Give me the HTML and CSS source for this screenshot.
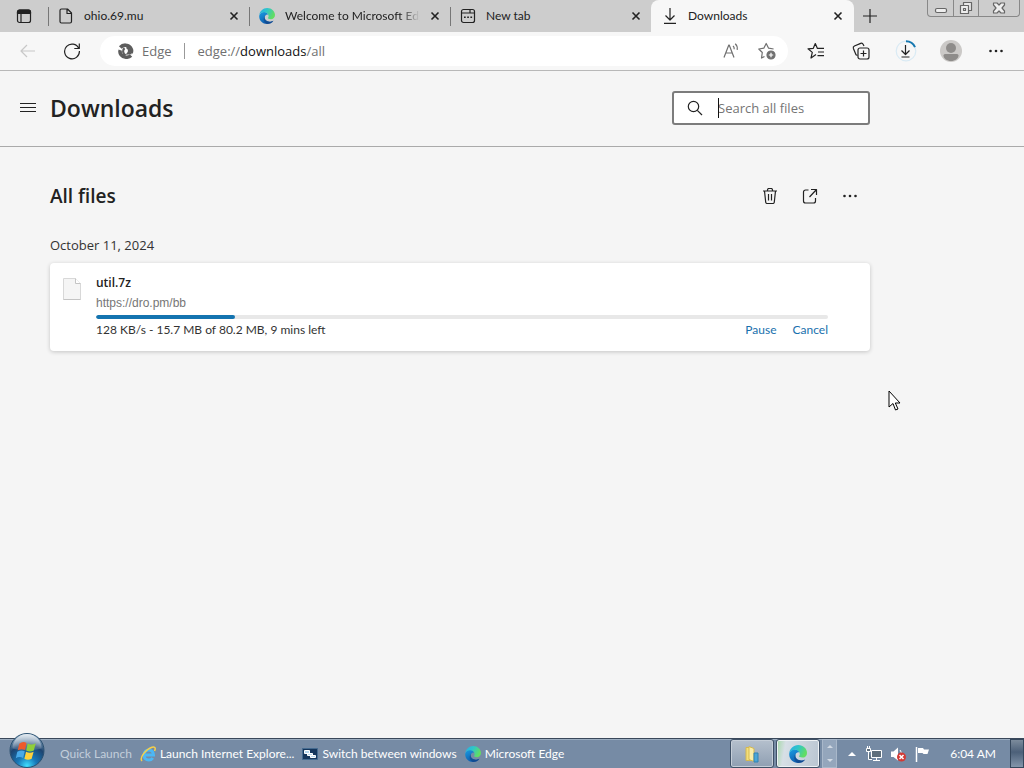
FILE: index.html
```
<!DOCTYPE html>
<html lang="en">
<head>
<meta charset="utf-8">
<title>Downloads</title>
<link rel="stylesheet" href="styles.css">
</head>
<body>
<svg class="defs" aria-hidden="true">
  <defs>
    <linearGradient id="edgeTop" x1="0" y1="0" x2="1" y2="0.4"><stop offset="0" stop-color="#2aa9e8"/><stop offset="0.5" stop-color="#2fc6c8"/><stop offset="1" stop-color="#62dd62"/></linearGradient>
    <linearGradient id="edgeLow" x1="0" y1="0" x2="0.6" y2="1"><stop offset="0" stop-color="#1b9de2"/><stop offset="1" stop-color="#0c55a8"/></linearGradient>
    <radialGradient id="orb" cx="0.5" cy="0.95" r="0.95"><stop offset="0" stop-color="#3fe0ff"/><stop offset="0.3" stop-color="#1878b8"/><stop offset="0.65" stop-color="#1d4470"/><stop offset="1" stop-color="#9ab6cc"/></radialGradient>
    <linearGradient id="gloss" x1="0" y1="0" x2="0" y2="1"><stop offset="0" stop-color="#fff" stop-opacity="0.75"/><stop offset="1" stop-color="#fff" stop-opacity="0.1"/></linearGradient>
    <symbol id="edge" viewBox="0 0 16 16">
      <path fill="url(#edgeLow)" d="M0.2 8.5C0.2 5.5 2.8 3.7 5.6 3.9c2 .2 3.3 1.300 3.700 2.700C7.500 5.900 5.600 7.300 5.700 9.600c.1 2.700 2.900 4.300 5.600 4.100 1.200-.1 2.200-.5 3.100-.9C13 14.900 10.700 16 8.100 16 3.700 16 .2 12.700.2 8.500z"/>
      <path fill="#123f80" fill-opacity=".55" d="M5.700 9.600c0 2.600 2.800 4.400 5.600 4.100 1.200-.1 2.200-.5 3.100-.9C13 14.900 10.700 16 8.500 16 5 15.500 3.500 11 5.700 8z"/>
      <path fill="url(#edgeTop)" d="M.2 7.500C.6 3.200 4 0 8.200 0 12.800 0 16 3.400 16 7c0 2.700-1.900 4.200-4.200 4.200-1.800 0-2.900-.6-2.900-1.100 0-.4.7-.7.7-1.900C9.600 5.800 7.600 4.300 5.200 4.300 2.800 4.300.9 5.500.2 7.500z"/>
    </symbol>
    <symbol id="close" viewBox="0 0 10 10"><path d="M1.500 1.500l7 7M8.500 1.500l-7 7"/></symbol>
    <symbol id="dots" viewBox="0 0 16 16"><g fill="currentColor" stroke="none"><circle cx="2.500" cy="8" r="1.300"/><circle cx="8" cy="8" r="1.300"/><circle cx="13.500" cy="8" r="1.300"/></g></symbol>
  </defs>
</svg>

<header class="browser">
  <div class="tabstrip">
    <button class="tab-actions" aria-label="Tab actions"><svg class="icon i16" viewBox="0 0 16 16"><rect x="1.500" y="2" width="13" height="12.500" rx="2"/><path fill="currentColor" d="M1.500 5.500V4a2 2 0 012-2h9a2 2 0 012 2v1.500zM5 6v8.500"/></svg></button>
    <div class="tab">
      <svg class="icon i16" viewBox="0 0 16 16"><path d="M3.500 1h6l4 4v8.500a1.500 1.500 0 01-1.500 1.500H3.500A1.500 1.500 0 012 13.500v-11A1.500 1.500 0 013.500 1zM9 1v4.500h4.500"/></svg>
      <span class="tab-title">ohio.69.mu</span>
      <button class="tab-close" aria-label="Close ohio.69.mu"><svg class="icon i10"><use href="#close"/></svg></button>
    </div>
    <div class="tab">
      <svg class="i16"><use href="#edge"/></svg>
      <span class="tab-title fade">Welcome to Microsoft Edge</span>
      <button class="tab-close" aria-label="Close Welcome"><svg class="icon i10"><use href="#close"/></svg></button>
    </div>
    <div class="tab">
      <svg class="icon i16" viewBox="0 0 16 16"><rect x="1.500" y="1.500" width="13" height="13" rx="2"/><path d="M1.500 5h8.500V2M10 5h4.500"/><path stroke-width="1.600" d="M4 9.300h1.700M7.200 9.300h1.700M10.400 9.300h1.700"/></svg>
      <span class="tab-title">New tab</span>
      <button class="tab-close" aria-label="Close New tab"><svg class="icon i10"><use href="#close"/></svg></button>
    </div>
    <div class="tab active">
      <svg class="icon i16" viewBox="0 0 16 16"><path d="M8 0v12M3.500 7.500L8 12l4.500-4.500M2 15.300h12"/></svg>
      <span class="tab-title">Downloads</span>
      <button class="tab-close" aria-label="Close Downloads"><svg class="icon i10"><use href="#close"/></svg></button>
    </div>
    <button class="new-tab" aria-label="New tab"><svg class="icon i16" viewBox="0 0 16 16"><path d="M8 1v14M1 8h14"/></svg></button>
    <div class="window-controls">
      <button aria-label="Minimize"><svg class="icon i16" viewBox="0 0 16 16"><rect x="2.500" y="8.500" width="11" height="4" rx="1.500" fill="#eee"/></svg></button>
      <button aria-label="Restore"><svg class="icon i16" viewBox="0 0 16 16"><path d="M5.500 2.500h8v8h-8z" fill="#e8e8e8"/><path d="M2.500 5.500h8v8h-8z" fill="#eee"/><path d="M5.500 8.500h2v2h-2z"/></svg></button>
      <button aria-label="Close window"><svg class="icon i16" viewBox="0 0 16 16"><path fill="#eee" d="M2.500 3h3.500l2 2 2-2h3.500v2L11 8l2.500 3v2H10l-2-2-2 2H2.500v-2L5 8 2.500 5z"/></svg></button>
    </div>
  </div>

  <div class="toolbar">
    <button class="tool back" aria-label="Back"><svg class="icon i16" viewBox="0 0 16 16"><path d="M15 8H1M7 2L1 8l6 6"/></svg></button>
    <button class="tool reload" aria-label="Refresh"><svg class="icon i18" viewBox="0 0 18 18"><path d="M15.800 6.500A7.400 7.400 0 1016.400 9M16.300 1.500V6.500h-5"/></svg></button>
    <div class="address">
      <svg class="i16 site" viewBox="0 0 16 16"><g fill="none" stroke="#5d5d5d"><path stroke-width="3.600" d="M2.300 4.500C5 1.300 10 1.500 12.300 4.500c1.300 1.800 1.500 4 .7 5.500"/><path stroke-width="3.600" d="M13 12.500c-2.800 2.600-7.500 2.200-9.800-.7C1.900 10.200 1.800 8.500 2.300 7.200"/><path stroke-width="2.200" d="M6.500 5.200C4.300 7 4.700 10.700 7.500 12.500M8.500 4.200c2.800 1 3.300 4.200 1.500 6.300l3.500-.3"/></g></svg>
      <span class="site-name">Edge</span>
      <span class="url">edge://<b>downloads</b>/all</span>
      <button class="addr-btn" aria-label="Read aloud"><svg class="icon i18" viewBox="0 0 18 18"><path d="M2 15.500L6.800 3h.4L12 15.500M3.700 11h6.600M11 4c1 .8 1.300 2 1.200 3.200M13.200 1.800c1.800 1.500 2.300 3.700 2 6"/></svg></button>
      <button class="addr-btn" aria-label="Add to favorites"><svg class="icon i18" viewBox="0 0 18 18"><path d="M6.500 14.500L3.500 16l.8-5.500L.8 7l5-.8L8.200 1.500l2.400 4.700 5 .8"/><circle cx="13" cy="13" r="4" fill="currentColor"/><path stroke="#fff" d="M13 10.800v4.400M10.800 13h4.400"/></svg></button>
    </div>
    <div class="tools">
      <button class="tool" aria-label="Favorites"><svg class="icon i18" viewBox="0 0 18 18"><path d="M9 12.500L4 16l1.300-5.600L1 6.800l5.300-.5L8.300 1.500l2 4.800H17M11 10h6M10.500 13.700H17"/></svg></button>
      <button class="tool" aria-label="Collections"><svg class="icon i18" viewBox="0 0 18 18"><rect x="6" y="6" width="11" height="11" rx="2"/><path d="M11.500 8.500v6M8.500 11.500h6M5.500 13.500l-1.500-.7L1.400 6.500a2 2 0 011-2.500l6.300-2.600a2 2 0 012.500 1L12 4"/></svg></button>
      <button class="tool" aria-label="Downloads, in progress"><svg class="icon i22" viewBox="0 0 22 22"><circle cx="11" cy="11" r="9.800" stroke="#d9eaf4"/><path d="M11 1.200a9.800 9.800 0 019 6" stroke="#1778b0" stroke-width="2"/><path d="M10.500 5v9.500M6.500 10.500l4 4 4-4M6.500 17h8"/></svg></button>
      <button class="tool" aria-label="Profile"><svg class="i22" viewBox="0 0 22 22"><circle cx="11" cy="11" r="11" fill="#cbc9c7"/><circle cx="11" cy="8" r="5" fill="#8e8c8a"/><path d="M3.500 15.500Q3.500 14 5 14h12q1.500 0 1.500 1.500c0 3-3.500 5.500-7.500 5.500s-7.500-2.500-7.500-5.500z" fill="#8e8c8a"/></svg></button>
      <button class="tool" aria-label="Settings and more"><svg class="icon i16"><use href="#dots"/></svg></button>
    </div>
  </div>
</header>

<div class="page">
  <header class="page-header">
    <button class="menu" aria-label="Menu"><svg class="icon i16" viewBox="0 0 16 16"><path d="M0 3.500h16M0 7.500h16M0 11.500h16"/></svg></button>
    <div class="column header-row">
      <h1>Downloads</h1>
      <label class="search">
        <svg class="icon i16" viewBox="0 0 16 16"><circle cx="6.500" cy="6.500" r="5.200"/><path d="M10.300 10.300L15 15"/></svg>
        <input type="search" placeholder="Search all files" aria-label="Search all files">
        <span class="caret"></span>
      </label>
    </div>
  </header>

  <main class="column">
    <div class="section-row">
      <h2>All files</h2>
      <button class="action" aria-label="Delete download files"><svg class="icon i16" viewBox="0 0 16 16"><path d="M1 3h14M5.500 3V2A1.500 1.500 0 017 .5h2A1.500 1.500 0 0110.500 2v1M2.500 3l1.200 11a1.500 1.500 0 001.500 1.500h5.600a1.500 1.500 0 001.500-1.500l1.200-11M6.500 6v6.500M9.500 6v6.500"/></svg></button>
      <button class="action" aria-label="Open downloads folder"><svg class="icon i16" viewBox="0 0 16 16"><path d="M6.500 2H3.500a2 2 0 00-2 2v9a2 2 0 002 2h8a2 2 0 002-2v-3M9 1.500h5.500V7M14.500 1.500l-7 7.500"/></svg></button>
      <button class="action" aria-label="More options"><svg class="icon i16"><use href="#dots"/></svg></button>
    </div>
    <h3>October 11, 2024</h3>
    <article class="card">
      <svg class="file" viewBox="0 0 18 22"><path d="M.5.5h12l5 5v16H.5z" fill="#f5f5f5" stroke="#d8d8d8"/><path d="M12.500.5v5h5" fill="#fff" stroke="#c4c4c4"/><path d="M.5 21.500h17" stroke="#c4c4c4"/></svg>
      <div class="details">
        <div class="name">util.7z</div>
        <div class="source">https://dro.pm/bb</div>
        <progress value="139" max="732" aria-label="util.7z progress"></progress>
        <div class="status"><span>128 KB/s - 15.7 MB of 80.2 MB, 9 mins left</span><button>Pause</button><button>Cancel</button></div>
      </div>
    </article>
  </main>
</div>

<svg class="cursor" viewBox="0 0 13 21" aria-hidden="true"><path d="M1 1v16l4-3.500L7.500 20l2.500-1-2.700-6H12z" fill="#fff" stroke="#000"/></svg>

<footer class="taskbar">
  <button class="start" aria-label="Start"><svg viewBox="0 0 36 36"><circle cx="18" cy="18" r="17.500" fill="url(#orb)" stroke="#29506f"/><path d="M3 16A15 15 0 0133 16Q18 20 3 16z" fill="url(#gloss)"/><path fill="#ef5a2a" d="M10 11q4-3 7.500-.7L16 17.500q-4-2-7.500.5z"/><path fill="#8fce3b" d="M18.700 10.800q4 2 8.300-.3l-2 7.500q-4 2-7.800 0z"/><path fill="#48a9e8" d="M8 19.300q4-2.500 7.700-.6l-1.700 7q-4-2-7.500.2z"/><path fill="#ffd13b" d="M17 19.300q4 2 7.800 0l-2 7.200q-4 2-7.500 0z"/></svg></button>
  <nav class="quick" aria-label="Quick Launch">
    <span class="quick-label">Quick Launch</span>
    <a href="#"><svg class="i16" viewBox="0 0 16 16"><path fill="none" stroke="#4cb8f5" stroke-width="3" d="M4 9h9.500c0-3-2-5-4.700-5S4 6 4 9s2 5 4.800 5c2 0 3.200-.7 4-2"/><path fill="none" stroke="#f6d04a" stroke-width="1.500" d="M2 15C-1 12 6 3 12 1.200c4-1 3.500 2 2.500 3.800"/></svg><span>Launch Internet Explore...</span></a>
    <a href="#"><svg class="i16" viewBox="0 0 16 16"><path fill="#15365c" stroke="#456b90" d="M.5 2.500h15v11H.5z"/><path fill="#b9d9ef" stroke="#fff" d="M2.500 4.500h5v3h-5zM5.500 7.500h5v2h-5zM8.500 9.500h5v2h-5z"/></svg><span>Switch between windows</span></a>
    <a href="#"><svg class="i16"><use href="#edge"/></svg><span>Microsoft Edge</span></a>
  </nav>
  <div class="tasks">
    <button class="task" aria-label="File Explorer"><svg class="i18" viewBox="0 0 18 18"><path fill="#f3df7c" stroke="#d5b94f" d="M3 2.500h5v13H3z"/><path fill="#faeeaa" stroke="#d5b94f" d="M6 1.500l5 2v13l-5-2z"/><path fill="#4ba6d8" stroke="#3183b4" d="M11 8h4v9h-4z"/></svg></button>
    <button class="task current" aria-label="Microsoft Edge"><svg class="i18"><use href="#edge"/></svg></button>
    <div class="scroller"><span></span><span class="down"></span></div>
  </div>
  <div class="tray">
    <button aria-label="Show hidden icons"><svg class="i8" viewBox="0 0 8 8"><path fill="#fff" d="M0 6h8L4 2z"/></svg></button>
    <button aria-label="Network"><svg class="i16" viewBox="0 0 16 16" fill="#5f6f7c" stroke="#fff"><path d="M5.500 4.500h10v7h-10zM10.500 11.500v3M7 14.500h7M.5 2.500h4v3h-4zM1.500 0v2.500M3.500 0v2.500M2.500 5.500v8H6"/></svg></button>
    <button aria-label="Volume muted"><svg class="i16" viewBox="0 0 16 16"><path fill="#fff" d="M1 5.500h2.500L8 1.500v13L3.500 11H1z"/><path d="M10 4q2 2 1 5" fill="none" stroke="#fff"/><circle cx="11.500" cy="11" r="4.500" fill="#d33a35"/><path d="M9.500 9l4 4M13.500 9l-4 4" stroke="#fff" stroke-width="1.500"/></svg></button>
    <button aria-label="Action center"><svg class="i16" viewBox="0 0 16 16"><path d="M2.500 1v15" stroke="#fff" stroke-width="1.500"/><path fill="#fff" d="M4 2h5l1 1.500h5L13.500 8H9.500L8.500 7H4z"/></svg></button>
    <time>6:04 AM</time>
    <button class="show-desktop" aria-label="Show desktop"></button>
  </div>
</footer>
</body>
</html>
```
FILE: styles.css
```
* { box-sizing: border-box; }
body {
  margin: 0;
  min-height: 100vh;
  display: flex;
  flex-direction: column;
  background: #f5f5f5;
  color: #222;
  font: 12px/16px Lato, "Open Sans", sans-serif;
}
button {
  margin: 0;
  padding: 0;
  border: 0;
  background: none;
  color: inherit;
  font: inherit;
  display: flex;
  align-items: center;
  justify-content: center;
}
svg { flex: none; display: block; }
.defs { position: absolute; width: 0; height: 0; }
.icon { fill: none; stroke: currentColor; stroke-width: 1.2; stroke-linejoin: round; }
.i8 { width: 8px; height: 8px; }
.i10 { width: 10px; height: 10px; stroke-width: 1.6; }
.i16 { width: 16px; height: 16px; }
.i18 { width: 18px; height: 18px; }
.i22 { width: 22px; height: 22px; }

.tabstrip { display: flex; height: 32px; background: #cdcdcd; }
.tab-actions { width: 48px; }
.tab {
  flex: 0 1 201px;
  min-width: 0;
  display: flex;
  align-items: center;
  gap: 10px;
  padding: 0 10px;
  position: relative;
}
.tab::before {
  content: "";
  position: absolute;
  left: 0;
  top: 7px;
  width: 1px;
  height: 19px;
  background: #777;
}
.tab.active { background: #f7f7f7; border-radius: 8px 8px 0 0; flex-basis: 203px; padding: 0 11px; }
.tab.active::before { display: none; }
.tab-title { flex: 1; min-width: 0; overflow: hidden; white-space: nowrap; }
.fade { mask-image: linear-gradient(to right, #000 85%, transparent); }
.tab-close { width: 10px; height: 16px; }
.new-tab { width: 32px; }
.window-controls {
  display: flex;
  height: 17px;
  margin: 0 4px 0 auto;
  border: 1px solid #888;
  border-top: 0;
  border-radius: 0 0 4px 4px;
  color: #666;
}
.window-controls button { width: 25px; }
.window-controls button + button { border-left: 1px solid #888; }
.window-controls button:last-child { width: 41px; }

.toolbar {
  display: flex;
  align-items: center;
  height: 39px;
  padding: 0 12px;
  background: #f7f7f7;
  border-bottom: 1px solid #b8b8b8;
}
.tool { width: 32px; height: 32px; }
.back { color: #c8c8c8; }
.reload { margin: 0 12px; }
.address {
  flex: 1;
  display: flex;
  align-items: center;
  height: 30px;
  padding: 0 12px 0 18px;
  border-radius: 15px;
  background: #fff;
  color: #707070;
  font: 13px/16px "Open Sans", "Noto Sans", sans-serif;
}
.site-name { margin-left: 8px; padding-right: 12px; border-right: 1px solid #999; }
.url { flex: 1; margin-left: 13px; }
.url b { color: #111; font-weight: 400; }
.addr-btn { width: 18px; height: 24px; margin-left: 18px; }
.tools { display: flex; gap: 13px; margin-left: 12px; }

.page { flex: 1; }
.column { margin: 0 50px; max-width: 820px; }
.page-header { position: relative; padding: 20px 0 21px; border-bottom: 1px solid #aaa; }
.menu { position: absolute; left: 20px; top: 29px; width: 16px; height: 16px; }
.header-row { display: flex; align-items: center; justify-content: space-between; }
h1, h2, h3 { margin: 0; font-family: "Open Sans", "Noto Sans", sans-serif; }
h1 { font-size: 23px; line-height: 32px; font-weight: 600; }
.search {
  position: relative;
  display: flex;
  align-items: center;
  width: 198px;
  height: 34px;
  padding-left: 13px;
  border: 2px solid #7c7c7c;
  border-radius: 3px;
  background: #fff;
}
.search input {
  flex: 1;
  min-width: 0;
  margin: 0 0 0 15px;
  padding: 0;
  border: 0;
  outline: 0;
  background: none;
  font: 13px/20px "Open Sans", "Noto Sans", sans-serif;
}
.search input::placeholder { color: #757575; }
.caret { position: absolute; left: 44px; top: 5px; width: 1px; height: 20px; background: #111; }
.section-row { display: flex; align-items: center; margin: 33px 0 0; padding-right: 4px; }
h2 { flex: 1; font-size: 19px; line-height: 32px; font-weight: 600; }
.action { width: 32px; height: 32px; margin-left: 8px; }
h3 { margin-top: 23px; font-size: 13px; line-height: 20px; font-weight: 400; color: #333; }
.card {
  display: flex;
  gap: 15px;
  margin-top: 8px;
  padding: 12px 42px 12px 13px;
  border-radius: 4px;
  background: #fff;
  box-shadow: 0 1px 4px rgba(0, 0, 0, 0.2);
}
.file { width: 18px; height: 22px; margin-top: 3px; }
.details { flex: 1; }
.name { font-family: "Open Sans", "Noto Sans", sans-serif; font-weight: 600; }
.source { margin-top: 4px; color: #767676; font-family: "Liberation Sans", sans-serif; }
progress {
  appearance: none;
  display: block;
  width: 100%;
  height: 4px;
  margin-top: 4px;
  border: 0;
  border-radius: 2px;
  overflow: hidden;
  background: #e8e8e8;
}
progress::-webkit-progress-bar { background: #e8e8e8; }
progress::-webkit-progress-value { background: #1474b0; border-radius: 2px; }
.status { display: flex; gap: 16px; margin-top: 3px; padding-bottom: 1px; color: #333; }
.status span { flex: 1; }
.status button { color: #1870ad; }
.cursor { position: absolute; left: 888px; top: 390px; width: 13px; height: 21px; }

.taskbar {
  display: flex;
  align-items: stretch;
  height: 30px;
  border-top: 1px solid #39475a;
  background: #768ba5;
  box-shadow: inset 0 1px #9caec1;
  color: #fff;
}
.start { width: 54px; align-items: flex-start; }
.start svg { width: 36px; height: 35px; margin-top: -6px; }
.quick { flex: 1; min-width: 0; display: flex; align-items: center; gap: 8px; padding-left: 6px; white-space: nowrap; }
.quick a { display: flex; align-items: center; gap: 4px; color: inherit; text-decoration: none; }
.quick-label { color: #c3cedb; }
.tasks { display: flex; gap: 2px; }
.task {
  width: 44px;
  border: 1px solid #3f5167;
  border-radius: 3px;
  background: linear-gradient(#b5c0cd, #8f9fb2);
  box-shadow: inset 0 0 0 1px #c5ced8;
}
.task.current { background: linear-gradient(100deg, #a5d8a8, #d7dfe6 20%, #b9c5d1); box-shadow: inset 0 0 0 1px #eef2f5; }
.scroller { width: 15px; display: flex; flex-direction: column; align-items: center; justify-content: space-between; padding: 5px 0; border: 1px solid #a9b8ca; background: #94a6bc; }
.scroller span { border: 3px solid transparent; border-top: 0; border-bottom: 3px solid #d2dae4; }
.scroller .down { transform: rotate(180deg); }
.tray { display: flex; align-items: center; gap: 8px; padding-left: 8px; }
.tray button:first-child { width: 13px; }
.tray time { margin: 0 6px 0 12px; }
.tray .show-desktop { width: 14px; align-self: stretch; border: 1px solid #35475c; background: linear-gradient(#7c8b9c, #4c6079 45%, #8395aa); }
```
